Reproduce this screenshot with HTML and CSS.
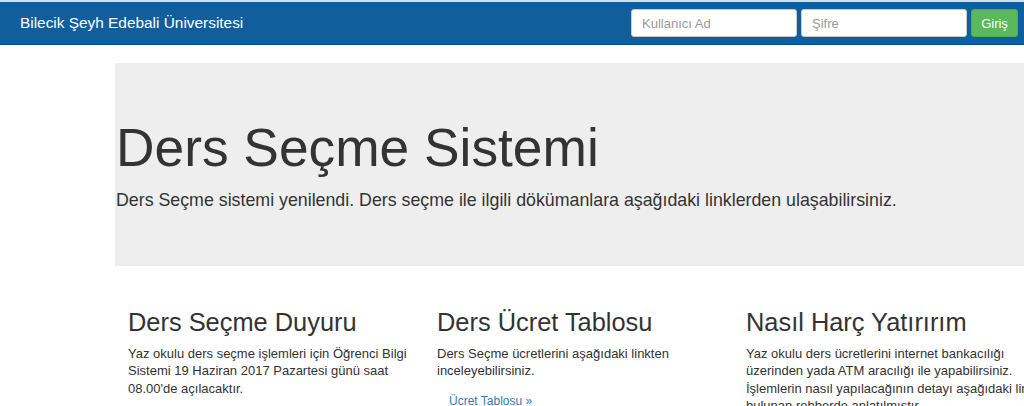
FILE: index.html
```html
<!DOCTYPE html>
<html lang="tr">
<head>
<meta charset="utf-8">
<title>Ders Seçme Sistemi</title>
<link rel="stylesheet" href="styles.css">
</head>
<body>
<nav class="navbar">
  <a class="brand" href="#">Bilecik Şeyh Edebali Üniversitesi</a>
  <form class="login">
    <input class="field" type="text" placeholder="Kullanıcı Ad">
    <input class="field" type="password" placeholder="Şifre">
    <button class="btn-login" type="button">Giriş</button>
  </form>
</nav>
<section class="jumbotron">
  <h1 class="title">Ders Seçme Sistemi</h1>
  <p class="lead">Ders Seçme sistemi yenilendi. Ders seçme ile ilgili dökümanlara aşağıdaki linklerden ulaşabilirsiniz.</p>
</section>
<div class="row">
  <div class="col">
    <h2 class="col-title">Ders Seçme Duyuru</h2>
    <p class="col-text">Yaz okulu ders seçme işlemleri için Öğrenci Bilgi Sistemi 19 Haziran 2017 Pazartesi günü saat 08.00'de açılacaktır.</p>
  </div>
  <div class="col">
    <h2 class="col-title">Ders Ücret Tablosu</h2>
    <p class="col-text">Ders Seçme ücretlerini aşağıdaki linkten inceleyebilirsiniz.</p>
    <a class="col-link" href="#">Ücret Tablosu »</a>
  </div>
  <div class="col">
    <h2 class="col-title">Nasıl Harç Yatırırım</h2>
    <p class="col-text">Yaz okulu ders ücretlerini internet bankacılığı üzerinden yada ATM aracılığı ile yapabilirsiniz. İşlemlerin nasıl yapılacağının detayı aşağıdaki linkte bulunan rehberde anlatılmıştır.</p>
  </div>
</div>
</body>
</html>
```
FILE: styles.css
```css
html, body {
  margin: 0;
  padding: 0;
  background: #fff;
  font-family: "Liberation Sans", Arial, Helvetica, sans-serif;
  color: #333;
  overflow: hidden;
}
.navbar {
  display: flex;
  align-items: center;
  justify-content: space-between;
  height: 42px;
  border-top: 2px solid #dcdcdc;
  border-bottom: 1px solid #0d5189;
  background: #115e9d;
  padding: 0 6px 0 20px;
}
.brand {
  color: #fff;
  font-size: 15.4px;
  text-decoration: none;
  padding-bottom: 1px;
}
.login {
  display: flex;
  gap: 4px;
  margin: 0;
}
.field {
  box-sizing: border-box;
  width: 166px;
  height: 28px;
  border: 1px solid #ccc;
  border-radius: 3px;
  padding: 0 10px;
  font-family: "Liberation Sans", Arial, sans-serif;
  font-size: 13px;
  color: #555;
  background: #fff;
}
.field::placeholder {
  color: #999;
}
.btn-login {
  box-sizing: border-box;
  width: 47px;
  height: 28px;
  border: 1px solid #4cae4c;
  border-radius: 3px;
  background: #5cb85c;
  color: #fff;
  font-family: "Liberation Sans", Arial, sans-serif;
  font-size: 13px;
  padding: 0;
}
.jumbotron {
  margin: 18px 0 0 115px;
  height: 203px;
  box-sizing: border-box;
  background: #eee;
  padding: 56px 0 0 1px;
}
.title {
  margin: 0;
  font-size: 53.3px;
  font-weight: 500;
  line-height: 1.1;
  color: #333;
  white-space: nowrap;
}
.lead {
  margin: 10px 0 0;
  font-size: 17.8px;
  line-height: 1.4;
  white-space: nowrap;
}
.row {
  display: flex;
  gap: 7px;
  margin: 43px 0 0 128px;
}
.col {
  flex: 0 0 302px;
  width: 302px;
}
.col-title {
  margin: 0;
  font-size: 25.4px;
  font-weight: 500;
  line-height: 1.1;
  color: #333;
  white-space: nowrap;
}
.col-text {
  margin: 8px 0 0;
  font-size: 13px;
  line-height: 17.5px;
}
.col-link {
  display: inline-block;
  margin: 13px 0 0 12px;
  font-size: 12px;
  line-height: 17px;
  color: #337ab7;
  text-decoration: none;
}
```
